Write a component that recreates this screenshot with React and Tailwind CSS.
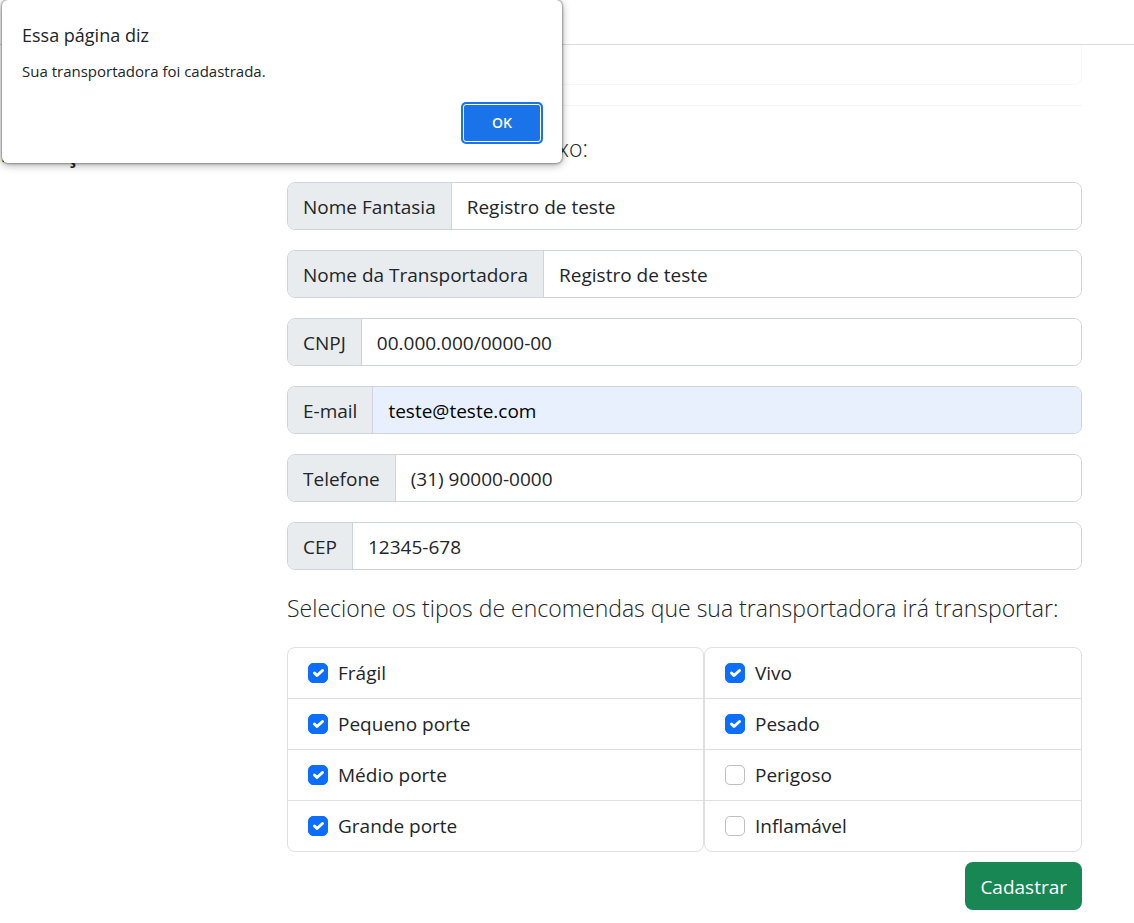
import { useState } from "react";

const fields = [
  { id: "fantasia", label: "Nome Fantasia", value: "Registro de teste" },
  { id: "transportadora", label: "Nome da Transportadora", value: "Registro de teste" },
  { id: "cnpj", label: "CNPJ", value: "00.000.000/0000-00" },
  { id: "email", label: "E-mail", value: "teste@teste.com", filled: true },
  { id: "telefone", label: "Telefone", value: "(31) 90000-0000" },
  { id: "cep", label: "CEP", value: "12345-678" },
];

const leftOptions = [
  ["Frágil", true],
  ["Pequeno porte", true],
  ["Médio porte", true],
  ["Grande porte", true],
];

const rightOptions = [
  ["Vivo", true],
  ["Pesado", true],
  ["Perigoso", false],
  ["Inflamável", false],
];

function Field({ id, label, value, filled }) {
  return (
    <div className="flex h-12 overflow-hidden rounded-lg border border-[#ced4da]">
      <label htmlFor={id} className="flex items-center border-r border-[#ced4da] bg-[#e9ecef] px-[15px] pt-0.5 whitespace-nowrap">
        {label}
      </label>
      <input
        id={id}
        defaultValue={value}
        className={
          filled
            ? "min-w-0 flex-1 bg-[#e8f0fe] px-[15px] pt-0.5 text-black outline-none"
            : "min-w-0 flex-1 bg-white px-[15px] pt-0.5 outline-none"
        }
      />
    </div>
  );
}

function Options({ items }) {
  return (
    <ul className="divide-y divide-[#dfdfdf] rounded-lg border border-[#dfdfdf]">
      {items.map(([name, checked]) => (
        <li key={name}>
          <label className="flex h-[50px] items-center gap-[10px] px-5">
            <span className="grid">
              <input
                type="checkbox"
                defaultChecked={checked}
                className="peer col-start-1 row-start-1 size-5 appearance-none rounded-[5px] border border-[#bfbfbf] bg-white checked:border-[#0d6efd] checked:bg-[#0d6efd]"
              />
              <svg
                viewBox="0 0 20 20"
                className="pointer-events-none invisible col-start-1 row-start-1 size-5 peer-checked:visible"
                fill="none"
                stroke="#fff"
                strokeWidth="3"
                strokeLinecap="round"
                strokeLinejoin="round"
                aria-hidden="true"
              >
                <path d="M6.5 10l2.5 2.5 5.5-5" />
              </svg>
            </span>
            {name}
          </label>
        </li>
      ))}
    </ul>
  );
}

export default function App() {
  const [open, setOpen] = useState(true);
  return (
    <div className="relative min-h-screen overflow-hidden bg-white font-['Open_Sans','Noto_Sans',sans-serif] text-[19px] leading-[30px] text-[#212529]">
      <header className="h-[45px] border-b border-[#d9dadb]" />
      <div className="flex pr-[52px]">
        <aside className="w-[287px] shrink-0 pt-[93px]">
          <h2 className="-ml-3 text-[23px] font-semibold">Endereço</h2>
        </aside>
        <main className="min-w-0 flex-1">
          <div className="h-10 rounded-b-lg border-x border-b border-[#f7f7f7]" />
          <hr className="mt-5 border-[#f5f5f5]" />
          <form onSubmit={(e) => e.preventDefault()}>
            <h3 className="pt-[23px] text-[23px] leading-[38px] font-light">Preencha seus dados abaixo:</h3>
            <div className="mt-[15px] grid gap-5">
              {fields.map((f) => (
                <Field key={f.id} {...f} />
              ))}
            </div>
            <h3 className="mt-[19px] text-[23px] leading-[38px] font-light">
              Selecione os tipos de encomendas que sua transportadora irá transportar:
            </h3>
            <div className="mt-5 grid grid-cols-[417fr_378fr]">
              <Options items={leftOptions} />
              <Options items={rightOptions} />
            </div>
            <div className="mt-[10px] mb-3 flex justify-end">
              <button type="submit" className="h-12 rounded-lg bg-[#198754] px-[15px] pt-0.5 text-white">
                Cadastrar
              </button>
            </div>
          </form>
        </main>
      </div>

      {open && (
        <div
          role="alertdialog"
          aria-labelledby="alert-title"
          aria-describedby="alert-text"
          className="absolute top-0 left-[2px] w-[560px] rounded-md bg-white pt-5 pr-[21px] pb-[21px] pl-5 shadow-[0_0_2px_1px_rgba(0,0,0,0.3),0_2px_8px_rgba(0,0,0,0.35)]"
        >
          <h1 id="alert-title" className="text-lg leading-[30px]">Essa página diz</h1>
          <p id="alert-text" className="mt-[10px] text-[15px] leading-[22px]">
            Sua transportadora foi cadastrada.
          </p>
          <div className="mt-[22px] flex justify-end">
            <button
              type="button"
              onClick={() => setOpen(false)}
              className="h-[38px] w-[78px] rounded-[3px] border border-white bg-[#1a73e8] text-sm font-semibold text-white ring-2 ring-[#1a73e8]"
            >
              OK
            </button>
          </div>
        </div>
      )}
    </div>
  );
}
